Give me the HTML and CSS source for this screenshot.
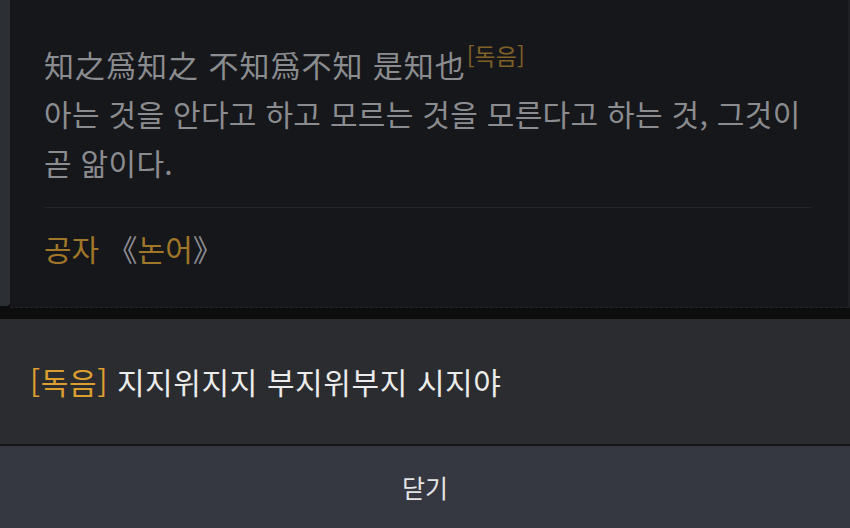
FILE: index.html
```html
<!DOCTYPE html>
<html lang="ko">
<head>
    <meta charset="UTF-8">
    <meta name="viewport" content="width=device-width, initial-scale=1.0">
    <title>명언</title>
    <link rel="stylesheet" href="styles.css">
</head>
<body>
    <div class="screen">
        <!-- 명언 카드 -->
        <div class="card-row">
            <div class="side-strip"></div>
            <div class="quote-card">
                <p class="quote-text">
                    <span class="hanja">知之爲知之 不知爲不知 是知也</span><sup class="reading-tag">[독음]</sup><br>
                    아는 것을 안다고 하고 모르는 것을 모른다고 하는 것, 그것이 곧 앎이다.
                </p>
                <div class="divider"></div>
                <p class="author">공자 <span class="book-mark">《</span>논어<span class="book-mark">》</span></p>
            </div>
            <div class="side-edge"></div>
        </div>
        <div class="gap-bar"></div>

        <!-- 독음 시트 -->
        <div class="sheet">
            <div class="sheet-body">
                <span class="sheet-tag">[독음]</span> 지지위지지 부지위부지 시지야
            </div>
            <button class="sheet-close">닫기</button>
        </div>
    </div>
</body>
</html>
```

FILE: styles.css
```css
/* 기본 */
body {
    margin: 0;
    padding: 0;
    background-color: #0d0d0e;
    font-family: "Noto Sans CJK KR", "Noto Sans", sans-serif;
}

.screen {
    width: 850px;
    height: 528px;
    display: flex;
    flex-direction: column;
    overflow: hidden;
}

/* 카드 */
.card-row {
    display: flex;
    height: 308px;
}

.side-strip {
    width: 10px;
    background-color: #2c2f34;
    border-bottom-right-radius: 4px;
    height: 306px;
}

.side-edge {
    width: 2px;
    background-color: #1f2024;
}

.quote-card {
    flex: 1;
    background-color: #16171b;
    padding: 40px 36px 0 34px;
    border-bottom: 1px dashed #24252a;
}

.quote-text {
    margin: 0;
    font-size: 30px;
    line-height: 49px;
    color: #8b8c90;
    letter-spacing: 0.3px;
}

.hanja {
    letter-spacing: 1px;
}

.reading-tag {
    font-size: 23px;
    color: #7f6128;
    vertical-align: 12px;
    line-height: 0;
    margin-left: 1px;
    letter-spacing: 0;
}

.divider {
    height: 1px;
    background-color: #24252a;
    margin: 20px 0 0 0;
}

.author {
    margin: 16px 0 0 0;
    font-size: 30px;
    line-height: 48px;
    color: #a07628;
}

.book-mark {
    color: #8b8c90;
}

.gap-bar {
    height: 11px;
    background-color: #0d0d0e;
}

/* 시트 */
.sheet {
    flex: 1;
    display: flex;
    flex-direction: column;
    background-color: #2b2c30;
}

.sheet-body {
    height: 127px;
    box-sizing: border-box;
    padding: 42px 0 0 30px;
    font-size: 30px;
    line-height: 40px;
    color: #ececec;
    letter-spacing: 0.6px;
    border-bottom: 2px solid #141517;
}

.sheet-tag {
    color: #dc9e2e;
}

.sheet-close {
    flex: 1;
    border: none;
    background-color: #363841;
    color: #e4e4e4;
    font-family: "Noto Sans CJK KR", sans-serif;
    font-size: 25px;
    padding: 0;
    cursor: pointer;
}
```
